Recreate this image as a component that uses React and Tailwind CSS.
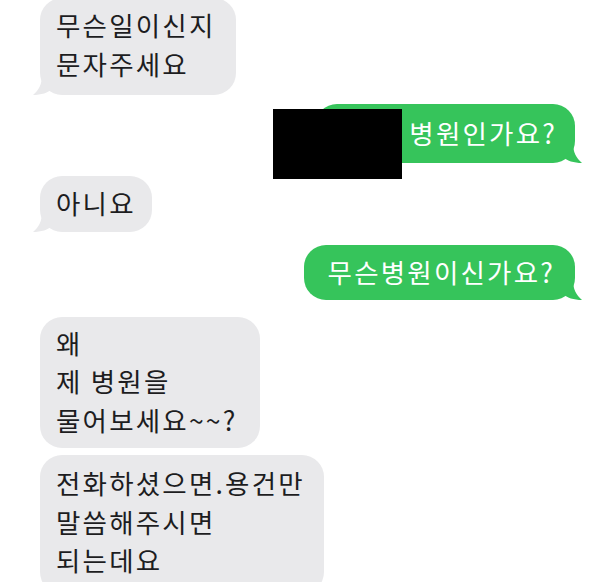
import React from 'react';

const FONT = '"Noto Sans CJK KR", "Noto Sans", sans-serif';

const TailLeft = () => (
  <svg className="absolute -left-[7px] bottom-0" width="22" height="20" viewBox="0 0 22 20">
    <path d="M9 0 C9 9 6 15 0 20 C8 20 15 18 20 13 L20 0 Z" fill="#e9e9eb" />
  </svg>
);

const TailRight = () => (
  <svg className="absolute -right-[7px] bottom-0" width="22" height="20" viewBox="0 0 22 20">
    <path d="M13 0 C13 9 16 15 22 20 C14 20 7 18 2 13 L2 0 Z" fill="#36c45b" />
  </svg>
);

const In = ({ children, tail = true, className = '' }) => (
  <div className={`relative self-start rounded-[22px] bg-[#e9e9eb] pl-[16px] text-[#1d1d1f] ${className}`}>
    {tail && <TailLeft />}
    <div className="relative">{children}</div>
  </div>
);

const Out = ({ children, className = '' }) => (
  <div className={`relative self-end rounded-[22px] bg-[#36c45b] pl-[17px] pr-[18px] text-white ${className}`}>
    <TailRight />
    <div className="relative">{children}</div>
  </div>
);

export default function App() {
  return (
    <div
      className="w-[608px] h-[582px] overflow-hidden bg-white flex flex-col pl-[40px] pr-[33px] text-[26.5px] leading-[38.5px] tracking-[2.2px]"
      style={{ fontFamily: FONT }}
    >
      <In className="-mt-[2px] pt-[8px] pb-[12px] pr-[21px]">
        <div>무슨일이신지</div>
        <div>문자주세요</div>
      </In>

      {/* 가려진 부분이 있는 메시지 */}
      <div className="relative self-end mt-[9px]">
        <Out className="w-[260px] py-[10px] text-right">
          <div>병원인가요?</div>
        </Out>
        <div className="absolute right-[173px] top-[5px] w-[129px] h-[70px] bg-black" />
      </div>

      <In className="mt-[13px] pt-[8px] pb-[10px] pr-[16px]">
        <div>아니요</div>
      </In>

      <Out className="mt-[13px] py-[8px] pl-[24px] pr-[20px]">
        <div>무슨병원이신가요?</div>
      </Out>

      <In tail={false} className="mt-[17px] pt-[7px] pb-[9px] pr-[23px]">
        <div>왜</div>
        <div>제 병원을</div>
        <div>물어보세요~~?</div>
      </In>

      <In tail={false} className="mt-[7px] pt-[9px] pb-[14px] pr-[19px]">
        <div>전화하셨으면.용건만</div>
        <div>말씀해주시면</div>
        <div>되는데요</div>
      </In>
    </div>
  );
}
